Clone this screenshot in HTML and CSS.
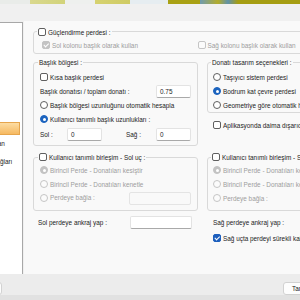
FILE: index.html
```html
<!DOCTYPE html>
<html lang="tr">
<head>
    <meta charset="UTF-8">
    <meta name="viewport" content="width=device-width, initial-scale=1.0">
    <title>Perde ayarları</title>
    <link rel="stylesheet" href="styles.css">
</head>
<body>
    <div class="banner"></div>
    <div class="toolbar"></div>

    <div class="main">
        <div class="list">
            <div class="list-items">
                <div class="item selected">Başlık</div>
                <div class="item">Genel plan</div>
                <div class="item">Perde bağları</div>
            </div>
        </div>

        <div class="panel">
            <div class="group wide">
                <div class="title"><span class="check"></span>Güçlendirme perdesi :</div>
                <div class="row split">
                    <div class="opt disabled"><span class="check on"></span>Sol kolonu başlık olarak kullan</div>
                    <div class="opt disabled"><span class="check"></span>Sağ kolonu başlık olarak kullan</div>
                </div>
            </div>

            <div class="cols band-top">
                <div class="group left">
                    <div class="title">Başlık bölgesi :</div>
                    <div class="row first"><span class="check"></span>Kısa başlık perdesi</div>
                    <div class="row spread"><span>Başlık donatısı / toplam donatı :</span><span class="field small">0.75</span></div>
                    <div class="row"><span class="radio"></span>Başlık bölgesi uzunluğunu otomatik hesapla</div>
                    <div class="row"><span class="radio on"></span>Kullanıcı tanımlı başlık uzunlukları :</div>
                    <div class="row pair">
                        <span class="pair-label">Sol :</span><span class="field small">0</span>
                        <span class="pair-label right">Sağ :</span><span class="field small">0</span>
                    </div>
                </div>

                <div class="right-col">
                    <div class="group right tight">
                        <div class="title">Donatı tasarım seçenekleri :</div>
                        <div class="row first"><span class="radio"></span>Taşıyıcı sistem perdesi</div>
                        <div class="row"><span class="radio on"></span>Bodrum kat çevre perdesi</div>
                        <div class="row"><span class="radio"></span>Geometriye göre otomatik hesapla</div>
                    </div>
                    <div class="row loose"><span class="check"></span>Aplikasyonda daima dışarıda kalsın</div>
                </div>
            </div>

            <div class="cols band-mid">
                <div class="group left joint">
                    <div class="title"><span class="check"></span>Kullanıcı tanımlı birleşim - Sol uç :</div>
                    <div class="row first disabled"><span class="radio on"></span>Birincil Perde - Donatıları kesiştir</div>
                    <div class="row disabled"><span class="radio"></span>Birincil Perde - Donatıları kenetle</div>
                    <div class="row spread disabled"><span><span class="radio"></span>Perdeye bağla :</span><span class="field wide-field off"></span></div>
                </div>

                <div class="group right joint">
                    <div class="title"><span class="check"></span>Kullanıcı tanımlı birleşim - Sağ uç :</div>
                    <div class="row first disabled"><span class="radio on"></span>Birincil Perde - Donatıları kesiştir</div>
                    <div class="row disabled"><span class="radio"></span>Birincil Perde - Donatıları kenetle</div>
                    <div class="row disabled"><span class="radio"></span>Perdeye bağla :</div>
                </div>
            </div>

            <div class="cols">
                <div class="plain left-plain">
                    <div class="row spread"><span>Sol perdeye ankraj yap :</span><span class="field wide-field"></span></div>
                </div>
                <div class="plain right-plain">
                    <div class="row spread"><span>Sağ perdeye ankraj yap :</span></div>
                    <div class="row near"><span class="check on blue"></span>Sağ uçta perdeyi sürekli kabul et</div>
                </div>
            </div>
        </div>
    </div>

    <div class="footer">
        <button class="btn back">Varsayılan</button>
        <button class="btn ok">Tamam</button>
    </div>
</body>
</html>
```

FILE: styles.css
```css
body {
    margin: 0;
    width: 300px;
    height: 300px;
    overflow: hidden;
    display: flex;
    flex-direction: column;
    background-color: #f0f0f0;
    font-family: "Liberation Sans", Arial, sans-serif;
    font-size: 6.4px;
    color: #1b1b1b;
}
.banner {
    height: 4px;
    flex-shrink: 0;
    background: linear-gradient(90deg,
        #e9ece9 0, #e9ece9 30px,
        #d9d88e 30px, #d2d37a 65px,
        #eef0ee 65px, #eef0ee 95px,
        #d6d270 95px, #cfcb64 130px,
        #e6edf1 130px, #e6edf1 168px,
        #a9a114 168px, #a9a114 200px,
        #6e9bb0 200px, #b3ac2a 218px,
        #5f92a9 228px, #a59d12 238px,
        #a59d12 300px);
}
.toolbar {
    height: 17px;
    flex-shrink: 0;
}
.main {
    display: flex;
    width: 360px;
    height: 253px;
    flex-shrink: 0;
}

/* left list */
.list {
    width: 22px;
    margin-top: 1px;
    background-color: #fff;
    border-top: 1px solid #a8a8a8;
    border-right: 1px solid #a8a8a8;
    overflow: hidden;
}
.list-items {
    margin-left: -26px;
    padding-top: 99px;
    width: 60px;
}
.item {
    height: 18px;
    line-height: 18px;
    white-space: nowrap;
}
.item.selected {
    width: 46px;
    height: 13px;
    line-height: 11px;
    box-sizing: border-box;
    background: linear-gradient(#fcdca2, #f6b961);
    border: 1px solid #e6a54c;
}

/* panel */
.panel {
    width: 330px;
    margin-left: 1px;
    padding: 10px 0 0 9px;
    background-color: #f9f9f9;
    box-sizing: border-box;
}
.group {
    border: 1px solid #d9d9d9;
    border-radius: 3px;
}
.title {
    display: flex;
    align-items: center;
    width: fit-content;
    height: 10px;
    margin: -6px 0 0 -2px;
    padding: 0 1px;
    background-color: #f9f9f9;
    white-space: nowrap;
}
.group.wide {
    padding: 0 0 1px 8px;
}
.group.wide .title {
    margin: -5px 0 0 -5px;
}
.row {
    display: flex;
    align-items: center;
    height: 14px;
    white-space: nowrap;
}
.group.wide .row {
    margin-top: 1px;
}
.split .opt {
    display: flex;
    align-items: center;
    width: 171px;
}
.cols {
    display: grid;
    grid-template-columns: 165px 120px;
    column-gap: 9px;
    align-items: start;
}
.band-top {
    margin-top: 8px;
}
.band-mid {
    margin-top: 11px;
}
.group.left {
    padding: 0 6px 4px 6px;
}
.group.right {
    padding: 0 0 0 5px;
}
.group.joint {
    padding-bottom: 5px;
}
.row.first {
    margin-top: 3px;
}
.joint .row.first {
    margin-top: 1px;
}
.row.pair {
    margin-top: 1px;
}
.row.spread {
    justify-content: space-between;
}
.row.loose {
    margin-top: 5px;
    padding-left: 6px;
}
.row.near {
    margin-top: 2px;
}
.pair-label {
    width: 27px;
}
.pair-label.right {
    width: 30px;
    margin-left: 24px;
}
.left-plain {
    padding: 4px 6px 0 5px;
}
.right-plain {
    padding: 4px 0 0 6px;
}
.disabled {
    color: #9d9d9d;
}

/* controls */
.check,
.radio {
    display: inline-flex;
    align-items: center;
    justify-content: center;
    flex-shrink: 0;
    width: 8px;
    height: 8px;
    margin-right: 2px;
    box-sizing: border-box;
    border: 1px solid #5f5f5f;
    background-color: #fff;
    vertical-align: middle;
}
.check {
    border-radius: 2px;
}
.radio {
    border-radius: 50%;
}
.check.on::after {
    content: "";
    width: 1.5px;
    height: 3.5px;
    margin-top: -1px;
    border: solid #fff;
    border-width: 0 1px 1px 0;
    transform: rotate(45deg);
}
.check.blue {
    background-color: #1d5fbd;
    border-color: #1d5fbd;
}
.radio.on {
    background-color: #1c64bf;
    border-color: #1c64bf;
}
.radio.on::after {
    content: "";
    width: 3px;
    height: 3px;
    border-radius: 50%;
    background-color: #fff;
}
.disabled .check,
.disabled .radio {
    border-color: #c5c5c5;
    background-color: #fbfbfb;
}
.disabled .check.on,
.disabled .radio.on {
    background-color: #c3c3c3;
    border-color: #c3c3c3;
}
.field {
    display: flex;
    align-items: center;
    height: 13px;
    box-sizing: border-box;
    padding-left: 3px;
    background-color: #fff;
    border: 1px solid #e3e3e3;
    border-bottom-color: #a9a9a9;
    border-radius: 2px;
    color: #1b1b1b;
}
.field.small {
    width: 35px;
}
.field.wide-field {
    width: 62px;
}
.field.off {
    background-color: #f9f9f9;
    border-color: #e4e4e4;
}

/* footer */
.footer {
    display: flex;
    justify-content: space-between;
    align-items: flex-start;
    flex: 1;
    padding-top: 8px;
    border-bottom: 5px solid #e1e1e1;
    background-color: #ececec;
}
.btn {
    height: 13px;
    padding: 0 0 0 8px;
    font-family: inherit;
    font-size: inherit;
    color: #1b1b1b;
    text-align: left;
    background-color: #fdfdfd;
    border: 1px solid #d2d2d2;
    border-radius: 3px;
}
.btn.back {
    width: 42px;
    margin-left: -40px;
}
.btn.ok {
    width: 40px;
    margin-right: -23px;
}
```
